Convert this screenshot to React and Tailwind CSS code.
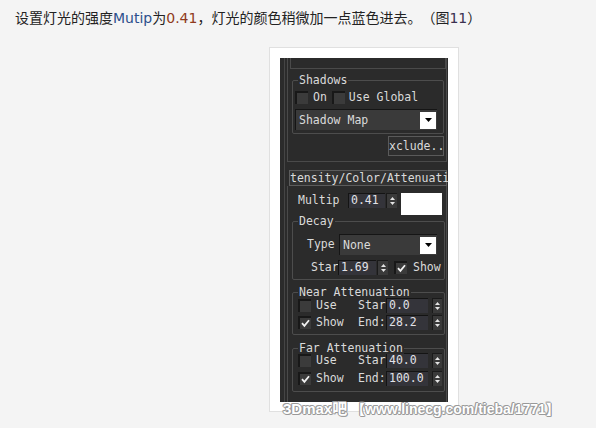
import React from 'react';

const mono = "font-['DejaVu_Sans_Mono',monospace]";

function Check({ checked }) {
    return (
        <div className="w-[13px] h-[13px] shrink-0 bg-[#3b3b3b] border-t-[2px] border-l-[2px] border-[#181818] flex items-center justify-center">
            {checked && (
                <svg width="9" height="9" viewBox="0 0 9 9">
                    <path d="M1 4.2 L3.4 6.8 L8 1.2" stroke="#f2f2f2" strokeWidth="1.8" fill="none" />
                </svg>
            )}
        </div>
    );
}

function Spin({ cls }) {
    return (
        <div className={`h-[15px] shrink-0 bg-[#3a3a3a] border-t border-l border-[#1a1a1a] flex flex-col items-center justify-center gap-[2px] ${cls}`}>
            <svg width="5" height="3" viewBox="0 0 5 3"><path d="M2.5 0 L5 3 H0Z" fill="#e4e4e4" /></svg>
            <svg width="5" height="3" viewBox="0 0 5 3"><path d="M0 0 H5 L2.5 3Z" fill="#e4e4e4" /></svg>
        </div>
    );
}

function Field({ value, cls }) {
    return (
        <div className={`h-[15px] shrink-0 bg-[#34343a] border-t border-l border-[#141414] text-[#e2e2e8] pl-[2px] leading-[13px] ${cls}`}>
            {value}
        </div>
    );
}

function Drop({ text, cls }) {
    return (
        <div className={`h-[21px] flex items-center bg-[#3a3a3a] border-t border-l border-[#151515] ${cls}`}>
            <span className="flex-1 pl-[3px] leading-[15px]">{text}</span>
            <div className="w-[16px] h-[17px] mr-[1px] bg-white flex items-center justify-center">
                <svg width="7" height="4" viewBox="0 0 7 4"><path d="M0 0 H7 L3.5 4Z" fill="#000" /></svg>
            </div>
        </div>
    );
}

function Group({ label, cls, children }) {
    return (
        <div className={`relative border border-[#4d4d4d] rounded-[2px] ${cls}`}>
            <span className="absolute -top-[6px] left-[5px] px-[1px] bg-[#2b2b2b] leading-[11px] whitespace-nowrap">{label}</span>
            {children}
        </div>
    );
}

function Label({ text, cls }) {
    return <div className={`shrink-0 whitespace-nowrap leading-[13px] ${cls}`}>{text}</div>;
}

function AttRow({ checked, label, name, value, cls }) {
    return (
        <div className={`flex items-center h-[15px] pl-[5px] ${cls}`}>
            <div className="w-[60px] flex items-center gap-[5px]">
                <Check checked={checked} />
                <span className="leading-[13px]">{label}</span>
            </div>
            <Label text={name} cls="w-[28px]" />
            <Field value={value} cls="w-[42px]" />
            <Spin cls="w-[10px] ml-[4px]" />
        </div>
    );
}

function Panel() {
    return (
        <div className={`w-[168px] h-[344px] bg-[#2b2b2b] flex ${mono} text-[11.5px] text-[#dadada]`}>
            <div className="w-[7px] flex">
                <div className="ml-[4px] w-px bg-[#454545]" />
            </div>
            <div className="w-[160px] flex flex-col">
                {/* General parameters rollout (bottom part) */}
                <div className="h-[104px] border-l border-r border-b border-[#4a4a4a] flex flex-col">
                    <div className="ml-[2px] h-[11px] border-l border-r border-b border-[#4a4a4a]" />
                    <Group label="Shadows" cls="mt-[11px] ml-[4px] mr-[2px] h-[54px]">
                        <div className="pt-[10px] pl-[2px] flex items-center h-[23px]">
                            <Check />
                            <span className="ml-[5px] leading-[15px]">On</span>
                            <div className="ml-[5px]"><Check /></div>
                            <span className="ml-[4px] leading-[15px]">Use Global</span>
                        </div>
                        <Drop text="Shadow Map" cls="mt-[5px] ml-[2px] w-[142px]" />
                    </Group>
                    <div className="mt-[2px] ml-auto mr-[2px] w-[56px] h-[20px] border border-[#5a5a5a] bg-[#2e2e2e] leading-[18px] whitespace-nowrap">
                        xclude..
                    </div>
                </div>

                {/* Intensity rollout */}
                <div className="mt-[8px] ml-[2px] h-[16px] border border-[#5c5c5c] bg-[#323232] whitespace-nowrap leading-[14px]">
                    tensity/Color/Attenuati
                </div>
                <div className="flex-1 border-l border-r border-[#4a4a4a] flex flex-col">
                    <div className="mt-[7px] ml-[10px] flex items-start">
                        <Label text="Multip" cls="w-[48px] mt-[1px]" />
                        <Field value="0.41" cls="w-[37px] ml-[2px]" />
                        <Spin cls="w-[11px] ml-[1px]" />
                        <div className="ml-[4px] w-[41px] h-[22px] bg-white" />
                    </div>

                    <Group label="Decay" cls="mt-[6px] ml-[4px] mr-[1px] h-[59px]">
                        <div className="pt-[12px] pl-[14px] flex items-center">
                            <Label text="Type" cls="w-[32px]" />
                            <Drop text="None" cls="w-[98px]" />
                        </div>
                        <div className="mt-[5px] pl-[18px] flex items-center">
                            <Label text="Star" cls="w-[27px]" />
                            <Field value="1.69" cls="w-[38px]" />
                            <Spin cls="w-[11px] ml-[1px]" />
                            <div className="ml-[6px]"><Check checked /></div>
                            <span className="ml-[6px] leading-[13px]">Show</span>
                        </div>
                    </Group>

                    <Group label="Near Attenuation" cls="mt-[12px] ml-[4px] mr-[1px] h-[43px]">
                        <AttRow label="Use" name="Star" value="0.0" cls="mt-[5px]" />
                        <AttRow checked label="Show" name="End:" value="28.2" cls="mt-[2px]" />
                    </Group>

                    <Group label="Far Attenuation" cls="mt-[13px] ml-[4px] mr-[1px] h-[44px]">
                        <AttRow label="Use" name="Star" value="40.0" cls="mt-[4px]" />
                        <AttRow checked label="Show" name="End:" value="100.0" cls="mt-[3px]" />
                    </Group>
                </div>
            </div>
        </div>
    );
}

export default function App() {
    return (
        <div className="relative w-[596px] h-[428px] overflow-hidden bg-[#f4f4f4]">
            <p className="pt-[7px] pl-[15px] text-[14px] leading-[20px] text-[#222] whitespace-nowrap [text-spacing-trim:space-all] font-['Noto_Sans_CJK_SC',sans-serif]">
                设置灯光的强度<span className="text-[#2c4f8c] font-['DejaVu_Sans',sans-serif]">Mutip</span>为<span className="text-[#8f3a20] font-['DejaVu_Sans',sans-serif]">0.41</span>，灯光的颜色稍微加一点蓝色进去。（图<span className="text-[#3a3050] font-['DejaVu_Sans',sans-serif]">11</span>）
            </p>
            <div className="mt-[19px] ml-[269px] w-[190px] h-[365px] border border-[#e0e0e0] bg-white pt-[10px] pl-[10px]">
                <Panel />
            </div>
            <div className="absolute left-[283px] top-[400px] whitespace-nowrap text-[14px] font-bold text-white leading-[17px] font-['Liberation_Sans','Noto_Sans_CJK_SC',sans-serif] [text-shadow:1px_0_#999,-1px_0_#999,0_1px_#999,0_-1px_#999,1px_1px_#aaa,-1px_-1px_#aaa]">
                <span className="text-[15px]">3Dmax吧</span> 【www.linecg.com/tieba/1771】
            </div>
        </div>
    );
}
